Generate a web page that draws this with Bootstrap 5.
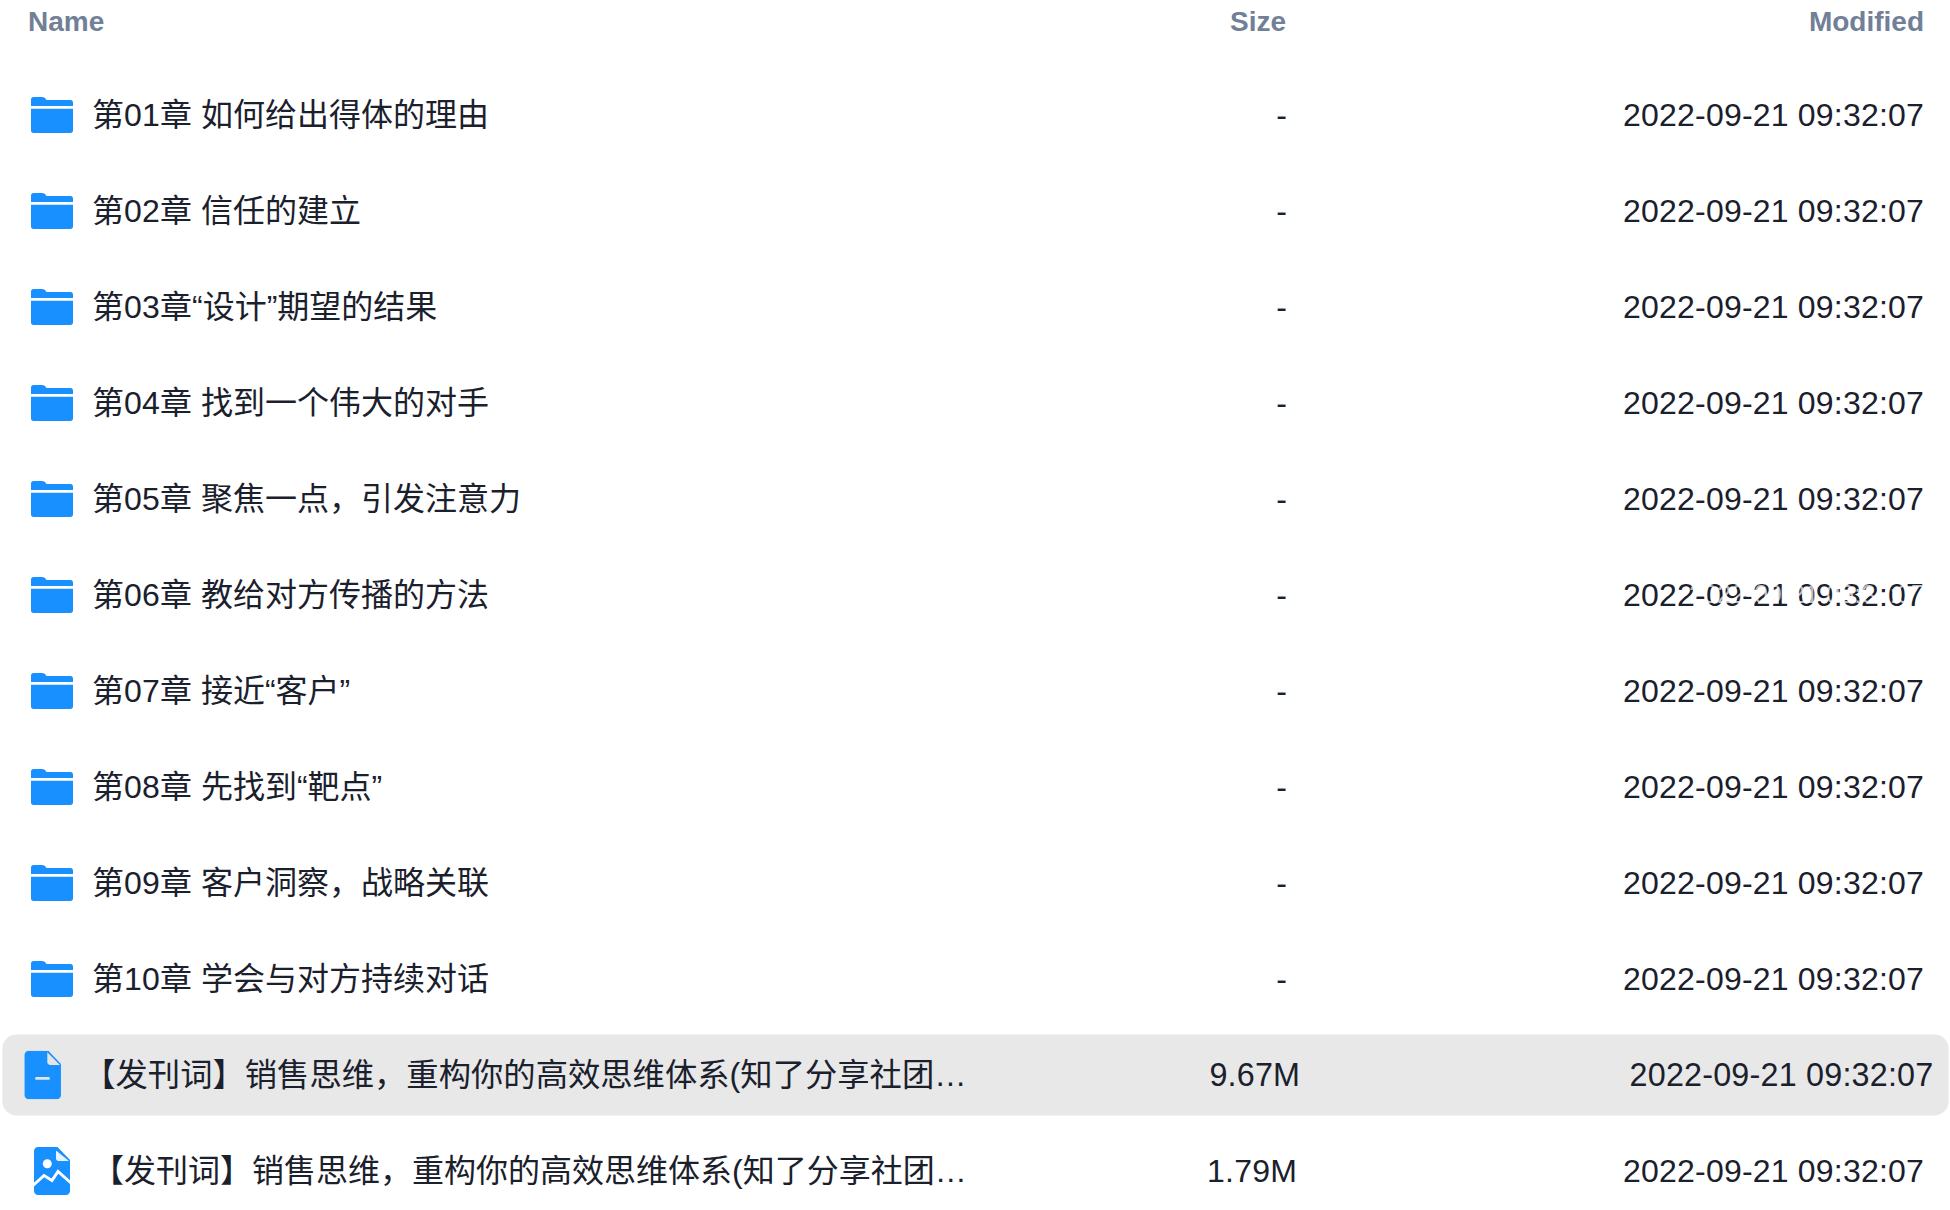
<!DOCTYPE html>
<html lang="zh">
<head>
<meta charset="utf-8">
<link href="https://cdn.jsdelivr.net/npm/bootstrap@5.3.0/dist/css/bootstrap.min.css" rel="stylesheet">
<style>
html,body{margin:0;height:1210px;overflow:hidden;background:#fff}
body{font-family:"Liberation Sans","Noto Sans CJK SC",sans-serif;color:#1a202c;text-rendering:optimizeSpeed}
.file-list{padding:0 11px 0 12px}
.head-row{height:44px;padding:0 15px 0 16px;font-size:28px;font-weight:700;color:#718096;line-height:44px;margin-bottom:31px}
.file-row{height:80px;margin-bottom:16px;padding:0 15px 0 16px;border-radius:14px;font-size:32px}
.file-row.is-hover{background:#e8e8e8;transform:scale(1.01)}
.col-name{flex:0 0 948px;min-width:0;gap:16px}
.col-size{flex:0 0 310px;text-align:right}
.file-row .col-size{flex-basis:311px;letter-spacing:.2px}
.file-row.is-file .col-size{flex-basis:321px}
.col-mod{flex:1 1 0;text-align:right;position:relative}
.file-row .col-mod{letter-spacing:.2px}
.num-run{letter-spacing:.2px}
.ico{width:48px;height:48px;flex:0 0 48px;display:block}
.ghost{position:absolute;right:-1px;top:50%;transform:translateY(-50%);color:#fff;font-size:25px;letter-spacing:.2px;opacity:.7;white-space:nowrap}
</style>
</head>
<body>
<div class="file-list">
<div class="head-row d-flex"><div class="col-name">Name</div><div class="col-size">Size</div><div class="col-mod">Modified</div></div>
<svg width="0" height="0" class="position-absolute"><defs>
<symbol id="i-folder" viewBox="0 0 48 48"><path fill="#1890ff" d="M3 8.500C3 7.100 4.100 6 5.500 6H14c1.600 0 2.800.7 3.600 1.800L18.500 9h24C44 9 45 10.100 45 11.500V15H3zM3 17.700h42V39.500c0 1.400-1.100 2.500-2.500 2.500h-37C4.100 42 3 40.900 3 39.500z"/></symbol>
<symbol id="i-doc" viewBox="0 0 48 48"><path fill="#1890ff" d="M10 0h19.500L42 13v31c0 2.200-1.800 4-4 4H10c-2.200 0-4-1.800-4-4V4c0-2.200 1.800-4 4-4z"/><path fill="#e4e4e4" d="M28.500 1.500L41 14H31c-1.400 0-2.500-1.100-2.500-2.500z"/><rect x="16.500" y="26" width="14.500" height="2.800" rx="1.200" fill="#e4e4e4"/></symbol>
<symbol id="i-img" viewBox="0 0 48 48"><path fill="#1890ff" d="M10 0h19.500L42 13v31c0 2.200-1.800 4-4 4H10c-2.200 0-4-1.800-4-4V4c0-2.200 1.800-4 4-4z"/><path fill="#e8f3ff" d="M28 3.500L41 14H30.500C29.100 14 28 12.900 28 11.500z"/><circle cx="19.300" cy="16.800" r="4.500" fill="#fff"/><path fill="none" stroke="#fff" stroke-width="3" d="M5 38.500L16 28.500l8 5 6-9 13 11.500"/></symbol>
</defs></svg>
<div id="rows"></div>
</div>
<script>
const names=["第01章 如何给出得体的理由","第02章 信任的建立","第03章“设计”期望的结果","第04章 找到一个伟大的对手","第05章 聚焦一点，引发注意力","第06章 教给对方传播的方法","第07章 接近“客户”","第08章 先找到“靶点”","第09章 客户洞察，战略关联","第10章 学会与对方持续对话"];
const d="2022-09-21 09:32:07",t="【发刊词】销售思维，重构你的高效思维体系(知了分享社团…";
const nm=n=>n.replace(/\d+/,m=>'<span class="num-run">'+m+'</span>');
const row=(n,s,i,c,g)=>`<div class="file-row d-flex align-items-center ${c||''}"><div class="col-name d-flex align-items-center"><svg class="ico"><use href="#${i}"/></svg><span class="text-nowrap">${nm(n)}</span></div><div class="col-size">${s}</div><div class="col-mod">${d}${g?'<span class="ghost">'+d+'</span>':''}</div></div>`;
document.getElementById('rows').innerHTML=names.map((n,i)=>row(n,'-','i-folder','',i==5)).join('')+row(t,'9.67M','i-doc','is-file is-hover')+row(t,'1.79M','i-img','is-file');
</script>
</body>
</html>
